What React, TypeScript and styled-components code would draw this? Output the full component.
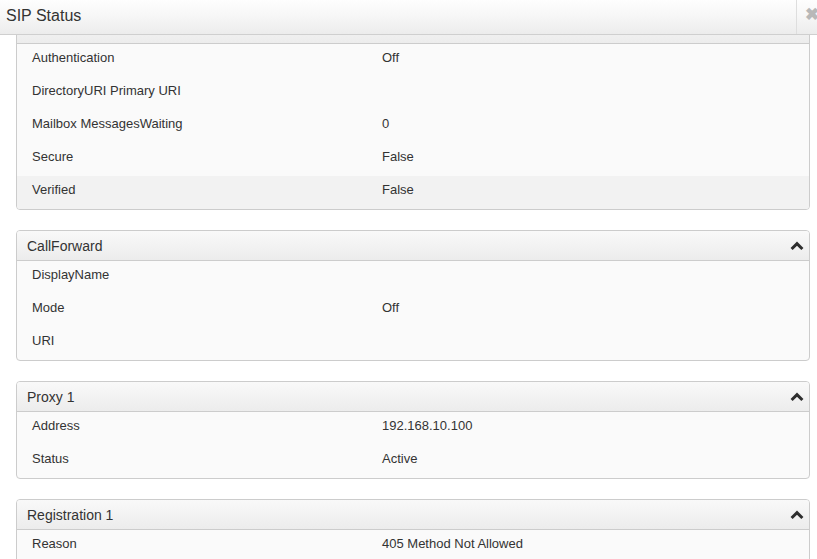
import React, { useLayoutEffect, useRef } from "react";
import styled, { createGlobalStyle } from "styled-components";

const Global = createGlobalStyle`
  html, body { margin: 0; padding: 0; background: #fff; overflow: hidden; }
  body { font-family: "Liberation Sans", Arial, sans-serif; color: #333; }
`;

const Modal = styled.div`
  width: 817px;
  height: 559px;
  display: flex;
  flex-direction: column;
  background: #fff;
  overflow: hidden;
`;

const Header = styled.div`
  height: 34px;
  flex: none;
  display: flex;
  align-items: stretch;
  border-bottom: 1px solid #cfcfcf;
  background: linear-gradient(to bottom, #fefefe 0%, #f6f6f6 50%, #ececec 100%);
  overflow: hidden;
`;

const Title = styled.div`
  flex: 1;
  padding-left: 6px;
  font-size: 16px;
  line-height: 32px;
  color: #333;
`;

const Close = styled.div`
  flex: none;
  width: 30px;
  margin-right: -9px;
  border-left: 1px solid #dedede;
  color: #b8b8b8;
  font-size: 17px;
  font-weight: bold;
  line-height: 30px;
  padding-left: 8px;
  box-sizing: border-box;
`;

const Body = styled.div`
  flex: 1;
  overflow: hidden;
  padding: 0 6px 20px 16px;
`;

const Panel = styled.section`
  width: 794px;
  box-sizing: border-box;
  border: 1px solid #cccccc;
  border-radius: 4px;
  background: #fafafa;
  margin-top: 20px;
  overflow: hidden;
`;

const PanelHead = styled.div`
  height: 29px;
  display: flex;
  align-items: center;
  justify-content: space-between;
  padding: 0 5px 0 10px;
  border-bottom: 1px solid #cccccc;
  background: linear-gradient(to bottom, #f9f9f9 0%, #ececec 100%);
  font-size: 14px;
  color: #333;
`;

const Row = styled.div<{ $alt?: boolean }>`
  display: flex;
  height: 33px;
  box-sizing: border-box;
  padding-top: 6px;
  font-size: 13px;
  line-height: 16px;
  background: ${(p) => (p.$alt ? "#f2f2f2" : "transparent")};
`;

const Label = styled.div`
  width: 335px;
  padding-left: 15px;
  flex: none;
`;

const Value = styled.div`
  flex: 1;
  padding-left: 15px;
`;

const Chevron = () => (
  <svg width="14" height="10" viewBox="0 0 14 10">
    <path d="M1.6 8 L7 2.6 L12.4 8" fill="none" stroke="#2e2e2e" strokeWidth="3" />
  </svg>
);

type Item = [string, string];

const sections: { title: string; rows: Item[]; alt?: number }[] = [
  {
    title: "",
    rows: [
      ["Authentication", "Off"],
      ["DirectoryURI Primary URI", ""],
      ["Mailbox MessagesWaiting", "0"],
      ["Secure", "False"],
      ["Verified", "False"],
    ],
    alt: 4,
  },
  {
    title: "CallForward",
    rows: [
      ["DisplayName", ""],
      ["Mode", "Off"],
      ["URI", ""],
    ],
  },
  {
    title: "Proxy 1",
    rows: [
      ["Address", "192.168.10.100"],
      ["Status", "Active"],
    ],
  },
  {
    title: "Registration 1",
    rows: [["Reason", "405 Method Not Allowed"]],
  },
];

export default function App() {
  const bodyRef = useRef<HTMLDivElement>(null);
  useLayoutEffect(() => {
    if (bodyRef.current) bodyRef.current.scrollTop = 42;
  }, []);
  return (
    <>
      <Global />
      <Modal>
        <Header>
          <Title>SIP Status</Title>
          <Close>✖</Close>
        </Header>
        <Body ref={bodyRef}>
          {sections.map((s, idx) => (
            <Panel key={idx}>
              <PanelHead>
                <span>{s.title}</span>
                {s.title && <Chevron />}
              </PanelHead>
              {s.rows.map(([k, v], i) => (
                <Row key={k} $alt={s.alt === i}>
                  <Label>{k}</Label>
                  <Value>{v}</Value>
                </Row>
              ))}
            </Panel>
          ))}
        </Body>
      </Modal>
    </>
  );
}
